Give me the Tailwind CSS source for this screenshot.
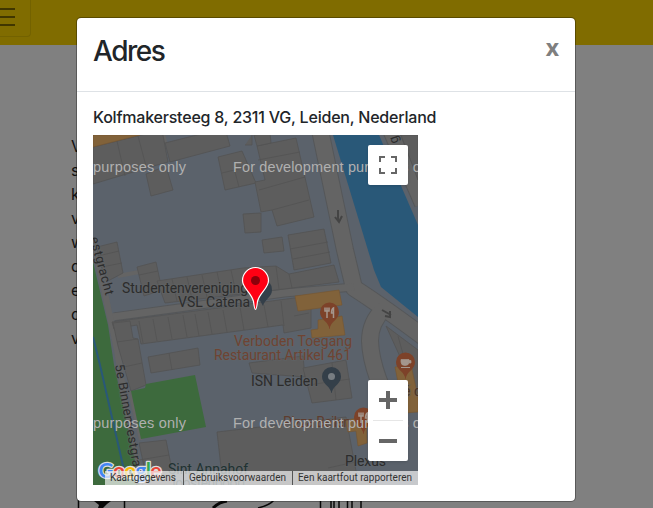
<!DOCTYPE html>
<html lang="nl"><head><meta charset="utf-8"><title>Adres</title>
<script src="https://cdn.jsdelivr.net/npm/@tailwindcss/browser@4"></script></head>
<body class="relative h-[508px] w-[653px] overflow-hidden bg-[#808080] font-['Inter',sans-serif] text-[#212529]">
<header class="h-[45px] bg-[#806c00]">
  <div class="h-[37px] w-[31px] rounded-br border-r border-b border-[#736200] pt-2">
    <svg class="h-[18px] w-[15px]" viewBox="0 0 15 18"><path d="M0 1H15M0 9H15M0 17H15" stroke="#403600" stroke-width="2"/></svg>
  </div>
</header>
<main class="ml-[71px] mt-[89px] w-[20px] text-[16px] leading-[24px] text-[#111]">
  <p>V</p><p>s</p><p>k</p><p>v</p><p>w</p><p>d</p><p>e</p><p>d</p><p>v</p>
</main>
<svg class="absolute left-0 top-[498px] h-[10px] w-[653px]" viewBox="0 498 653 10" fill="none" stroke="#080808" stroke-width="1.500"><path d="M78.500 498V508M124.500 498V508M320.500 498V508M361 498V508"/><path d="M331 498V508M334 498V508M339 498V508M347.500 498V508M352 498V508"/><path d="M94 501H111L107 504L103 508H98L99 505Z" fill="#080808" stroke="none"/><path d="M213 508Q219 502 227 501" stroke-width="3"/><path d="M258 508Q270 505 274 500" stroke-width="1.500"/></svg>

<section class="absolute left-[76px] top-[17px] flex h-[485px] w-[500px] flex-col rounded-[5px] border border-black/30 bg-white bg-clip-padding">
  <div class="flex h-[74px] shrink-0 items-start justify-between border-b border-[#dee2e6] px-4 pt-4">
    <h1 class="text-[28px] font-[550] leading-[34px] tracking-[-1.500px]">Adres</h1>
    <button class="mt-[2px] font-['Open_Sans',sans-serif] text-[23px] font-bold leading-[22px] text-[#7f7f7f]">x</button>
  </div>
  <div class="px-4 pt-[16px]">
    <h2 class="h-[27px] whitespace-nowrap text-[16px] font-medium leading-[19px] tracking-[-0.21px]">Kolfmakersteeg 8, 2311 VG, Leiden, Nederland</h2>
    <div class="relative h-[350px] w-[325px] overflow-hidden">
      <svg class="block h-[350px] w-[325px]" viewBox="93 135 325 350" font-family="Roboto, sans-serif">
        <rect x="93" y="135" width="325" height="350" fill="#5b626b"/>
        <!-- water -->
        <path d="M333 135H379L418 225V317L381 287L374 270Z" fill="#295878"/>
        <!-- roads, outlined -->
        <g fill="none" stroke="#555759">
          <path d="M320 130L345 250L354 288Q382 306 425 338" stroke-width="18" stroke-linejoin="round"/>
          <path d="M384 309Q370 322 370 341Q371 374 400 425" stroke-width="18"/>
          <path d="M390 130L422 204" stroke-width="16"/>
          <path d="M354 287L284 293L179 308L114 317" stroke-width="9"/>
        </g>
        <g fill="none" stroke="#646464">
          <path d="M320 130L345 250L354 288Q382 306 425 338" stroke-width="16" stroke-linejoin="round"/>
          <path d="M354 287L284 293L179 308L112 317" stroke-width="7"/>
          <path d="M384 309Q370 322 370 341Q371 374 400 425" stroke-width="16"/>
          <path d="M93 240L105 293L117 350L126 408L143 486" stroke-width="6"/><path d="M118 276L139 272M130 391L141 440" stroke-width="4"/>
          <path d="M390 130L422 204" stroke-width="14"/><path d="M163 135L165 145" stroke-width="5"/>
        </g>
        <!-- buildings -->
        <g fill="#5d5d5d" stroke="#535353" stroke-width=".8">
          <path d="M93 147L162 130L168 162L150 167L93 184Z"/><path d="M117 141L125 176M138 136L146 166M146 174L166 166L173 190L151 196Z"/>
          <path d="M165 143L225 128L230 146L170 162Z"/><path d="M218 157L242 151L256 183L225 190ZM222 173L247 167M235 172L239 187M245 145L252 145V135"/>
          <path d="M257 146L296 138L314 217L277 226L272 210L261 212L255 182L265 180Z"/><path d="M258 160L300 152M259 190L305 177M272 210L309 200M254 135L270 133L271 143L257 146Z"/>
          <path d="M243 214L261 213V232L245 233ZM262 240L282 237L284 251L264 253Z"/>
          <path d="M288 235L324 229L331 263L294 270Z"/><path d="M290 249L328 242M293 259L330 252"/>
          <path d="M97 247L117 242L123 273L108 281L99 262ZM98 256L119 251M102 267L122 263"/>
          <path d="M137 267L156 262L162 290L144 296ZM139 275L158 271"/>
          <path d="M157 281L243 268L276 266L289 274L334 265L339 282L284 289L165 303Z"/><path d="M172 279L177 301M187 277L192 299M202 275L207 297M217 272L222 295M231 270L236 293M276 266L279 289M289 274L292 288"/>
          <path d="M112 322L294 298L311 298L311 328L284 333L283 325L141 344L137 325L114 329Z"/><path d="M139 321L143 343M153 319L157 341M168 317L172 339M183 315L187 337M195 314L199 336M208 312L212 334M223 310L227 332M240 307L244 330M264 305L268 327M281 301L284 326M294 316L309 313"/>
          <path d="M113 323L130 321L133 338L138 339L146 385L131 391L118 346ZM117 342L138 339M119 368L142 363"/>
          <path d="M148 357L198 348L200 365L151 373ZM169 353L172 370M249 363L303 356L305 377L252 373Z"/>
          <path d="M303 368L346 360L352 398L312 403ZM332 363L336 400M308 385L350 379"/>
          <path d="M139 443L166 440L175 485H148ZM139 460L169 455"/>
          <path d="M217 432L346 417L356 471L370 485H223ZM328 468L355 462"/>
          <path d="M386 326L418 350V394L407 372ZM398 336L408 372M401 135H418V180Z"/>
        </g>
        <!-- parks and canal -->
        <path d="M93 262L108 325L114 365L128 428L140 485H93ZM131 391L145 388L146 384L195 375L206 427L141 439Z" fill="#3d6a3d"/>
        <path d="M93 337L100 365L124 470" fill="none" stroke="#295878" stroke-width="2"/>
        <g fill="#81623a" stroke="#755530" stroke-width=".6"><path d="M93 147L140 135H93ZM295 296L339 290L342 305L298 311ZM318 320L342 316L345 335L312 338L311 330L318 329ZM395 367L411 365L418 397V412L404 413ZM345 420L366 417L367 443L358 446L356 431L348 432Z"/></g>
        <path d="M338 210V221M335 217L339 222L342 216M382 310L391 315M390 311V317L385 316" fill="none" stroke="#444" stroke-width="2"/>
        <!-- place markers -->
        <path id="pin-a" d="M329.500 302.500a9.500 9.500 0 0 1 9.500 9.500c0 7-7 9-9 15q0 2-.5 2t-.5-2c-2-6-9-8-9-15a9.500 9.500 0 0 1 9.500-9.500Z" fill="#7d4229"/>
        <path id="cutlery" d="M325 307.500V311H329V307.500M327 307.500V318M333.500 318V308Q331.500 309 331.500 313H333" fill="none" stroke="#a4968d" stroke-width="1.500"/>
        <use href="#pin-a" x="76" y="50"/><path d="M401 359.500H409V362Q409 365.500 405 365.500T401 362ZM409 360.500H411V363H409" fill="#a4968d" fill-rule="evenodd" stroke="#a4968d" stroke-width=".7"/><path d="M401 367.500H410" stroke="#a4968d"/>
        <use href="#pin-a" x="34" y="105"/><use href="#cutlery" x="34" y="105"/>
        <path d="M331.500 367a9.500 9.500 0 0 1 9.500 9.500c0 7-7 9-9 15q0 1.500-.5 1.500t-.5-1.500c-2-6-9-8-9-15a9.500 9.500 0 0 1 9.500-9.500Z" fill="#343f49"/><circle cx="331.500" cy="376.500" r="3.500" fill="#777d82"/>
        <path d="M263 280a9 9 0 0 1 9 10c0 7-7 9-9 16l-7-13Z" fill="#343f49"/>
        <!-- map labels -->
        <g font-size="14" fill="#2c2c2c" stroke="#62666a" stroke-opacity=".4" stroke-width="2" paint-order="stroke">
          <text x="122" y="293" textLength="126">Studentenvereniging</text><text x="178" y="307" textLength="72">VSL Catena</text>
          <text x="251" y="386" textLength="67">ISN Leiden</text><text x="345" y="466" textLength="41">Plexus</text>
          <text x="168" y="474" textLength="80" fill="#203232">Sint Annahof</text><text x="168" y="488" textLength="78" fill="#203232">Joostenpoort</text>
          <text transform="translate(115 365) rotate(80)" font-size="13" textLength="123">5e Binnenvestgracht</text>
          <text transform="translate(90 238) rotate(75)" font-size="13" textLength="60">estgracht</text>
          <text transform="translate(399 142) rotate(-110)" font-size="13">g</text>
          <g fill="#6f4432"><text x="234" y="346" textLength="118">Verboden Toegang</text><text x="214" y="360" textLength="137">Restaurant Artikel 461</text><text x="283" y="427" textLength="68" fill="#5e3c2e">Pizza Beilen</text><text x="403" y="396" fill="#4b3424">é d</text></g>
        </g>
        <g font-family="'Liberation Sans',sans-serif" font-size="14.500" fill="#b0b0b0">
          <text x="93" y="171.500" textLength="93">purposes only</text><text x="233" y="171.500" textLength="196">For development purposes on</text>
          <text x="93" y="427.500" textLength="93">purposes only</text><text x="233" y="427.500" textLength="196">For development purposes on</text>
        </g>
        <path d="M255.500 267.500a13 13 0 0 1 13 13c0 8-9 12-11 21q-1 8-2 8t-2-8c-2-9-11-13-11-21a13 13 0 0 1 13-13Z" fill="#ff0014" stroke="#fff" stroke-width="1.200"/><circle cx="255.500" cy="280.500" r="4.500" fill="#8b000b"/>
        <text x="98.500" y="477.500" font-family="Lato,sans-serif" font-size="21" font-weight="700" textLength="63" stroke="#ddd" stroke-width="2.500" paint-order="stroke" stroke-linejoin="round"><tspan fill="#4285f4">G</tspan><tspan fill="#ea4335">o</tspan><tspan fill="#fbbc05">o</tspan><tspan fill="#4285f4">g</tspan><tspan fill="#34a853">l</tspan><tspan fill="#ea4335">e</tspan></text>
        <rect x="105" y="471" width="313" height="14" fill="#f5f5f5" fill-opacity=".7"/>
        <path d="M183.500 471V485M292.500 471V485" stroke="#555"/>
        <g font-size="10" fill="#333"><text x="110" y="481" textLength="66">Kaartgegevens</text><text x="189" y="481" textLength="97">Gebruiksvoorwaarden</text><text x="298" y="481" textLength="114">Een kaartfout rapporteren</text></g>
      </svg>
      <button class="absolute left-[275px] top-[10px] flex h-10 w-10 items-center justify-center rounded-xs bg-white shadow"><svg class="h-[18px] w-[18px]" viewBox="0 0 18 18"><path d="M1 6V1H6M12 1H17V6M17 12V17H12M6 17H1V12" fill="none" stroke="#666" stroke-width="2"/></svg></button>
      <div class="absolute left-[275px] top-[245px] flex h-[81px] w-10 flex-col items-center rounded-xs bg-white shadow">
        <button class="flex h-10 items-center"><svg class="h-[18px] w-[18px]" viewBox="0 0 18 18"><path d="M9 0V18M0 9H18" stroke="#666" stroke-width="4"/></svg></button>
        <div class="h-px w-[30px] bg-[#e6e6e6]"></div>
        <button class="flex h-10 items-center"><svg class="h-[18px] w-[18px]" viewBox="0 0 18 18"><path d="M0 9H18" stroke="#666" stroke-width="4"/></svg></button>
      </div>
    </div>
  </div>
</section>
</body></html>
